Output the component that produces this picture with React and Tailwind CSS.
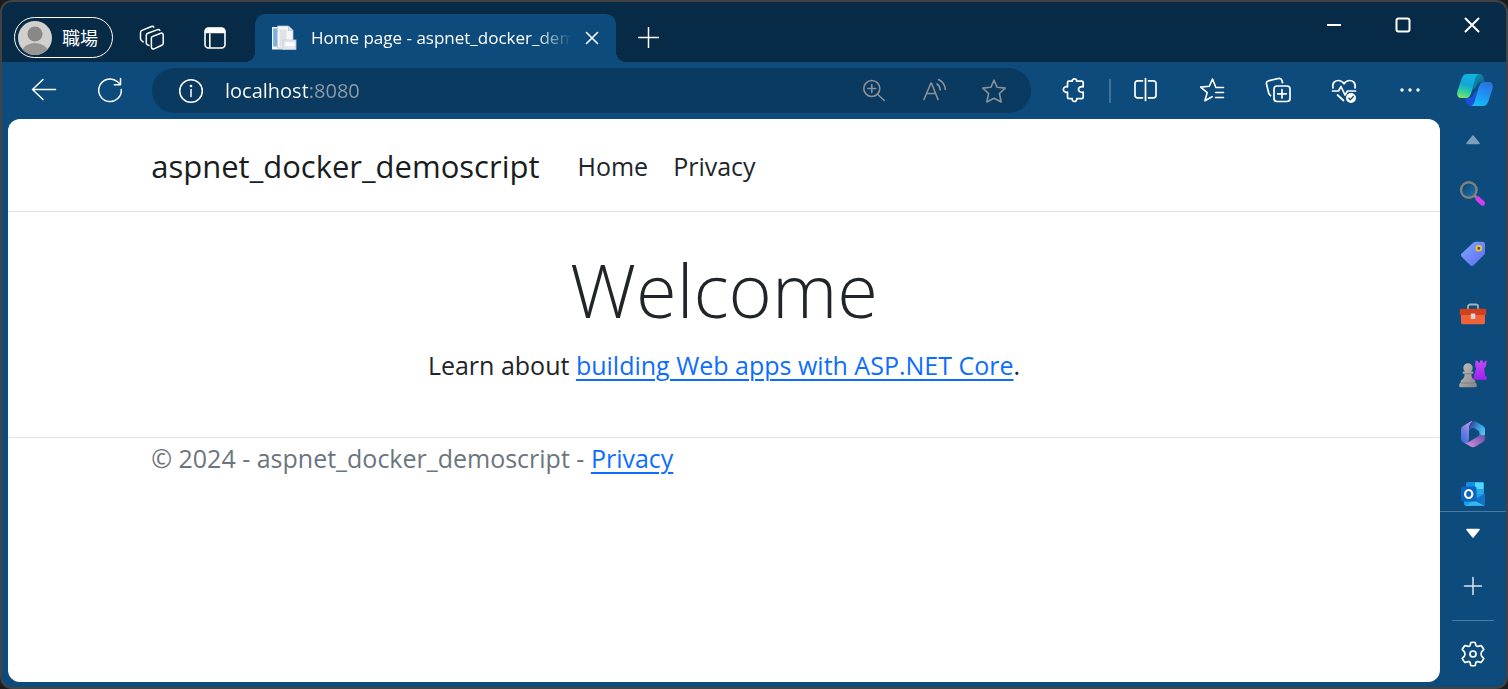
import React from "react";

function Icon({ size = 26, w = 1.6, children }) {
  return (
    <svg
      width={size}
      height={size}
      viewBox={`0 0 ${size} ${size}`}
      fill="none"
      stroke="currentColor"
      strokeWidth={w}
      strokeLinecap="round"
      strokeLinejoin="round"
      aria-hidden="true"
    >
      {children}
    </svg>
  );
}

function IconButton({ label, className = "", children }) {
  return (
    <button type="button" aria-label={label} className={`flex shrink-0 items-center justify-center ${className}`}>
      {children}
    </button>
  );
}

function TitleBar() {
  return (
    <div className="flex h-[60px] shrink-0 items-end bg-[#072b46] pl-3">
      <button
        type="button"
        className="mb-1 flex h-[41px] w-[99px] shrink-0 items-center gap-2.5 rounded-full border border-white pl-[3px] text-[18px] leading-6"
      >
        <svg width="34" height="34" viewBox="0 0 34 34" aria-hidden="true">
          <defs>
            <clipPath id="avatar">
              <circle cx="17" cy="17" r="17" />
            </clipPath>
          </defs>
          <g clipPath="url(#avatar)">
            <rect width="34" height="34" fill="#d2d0ce" />
            <circle cx="17" cy="13" r="7.6" fill="#8a8886" />
            <ellipse cx="17" cy="31" rx="13" ry="9" fill="#979593" />
          </g>
        </svg>
        職場
      </button>
      <IconButton label="Workspaces" className="mb-1 ml-[7px] h-[41px] w-16">
        <Icon size={26} w={1.5}>
          <path d="M13.200 11.600 21.800 8.200c1.200-.4 2.400.4 2.400 1.700v8.300c0 1-.6 1.800-1.500 2.100l-7.600 3.600c-1.400.5-2.700-.3-2.700-1.800V13c0-.7.3-1.200.8-1.400Z" />
          <path d="M10 20.500 8.200 19.600C7.600 19.200 7.300 18.600 7.300 17.900V10.300c0-1 .6-1.800 1.500-2.100L18.600 4.600c.9-.3 1.800 0 2.200.7" />
          <path d="M4.200 16.900 2.400 15.500C1.800 15.100 1.500 14.500 1.500 13.800V7.500c0-1 .6-1.800 1.500-2.100L12.500 1.500c.9-.3 1.900 0 2.300.7" />
        </Icon>
      </IconButton>
      <IconButton label="Tab actions" className="mb-1 h-[41px] w-[62px]">
        <Icon size={24} w={1.6}>
          <rect x="2" y="2" width="20" height="20" rx="3.5" />
          <path d="M2.500 6.500V5A2.500 2.500 0 0 1 5 2.500h14A2.500 2.500 0 0 1 21.500 5v1.500Z" fill="currentColor" />
          <path d="M6.800 8v13.500" />
        </Icon>
      </IconButton>
      <div className="relative ml-[9px] flex h-12 w-[361px] items-center rounded-t-[10px] bg-[#0c4b7b] pl-4 before:absolute before:right-full before:bottom-0 before:size-[10px] before:bg-[radial-gradient(circle_at_0_0,transparent_10px,#0c4b7b_10px)] after:absolute after:bottom-0 after:left-full after:size-[10px] after:bg-[radial-gradient(circle_at_100%_0,transparent_10px,#0c4b7b_10px)]">
        <svg width="26" height="26" viewBox="0 0 26 26" aria-hidden="true">
          <rect x="1" y="2" width="12" height="22.500" fill="#f3f4f6" />
          <rect x="2.200" y="3.500" width="4" height="18" fill="#78b0e0" />
          <path d="M6.500 1h11l4.500 4.500V23H6.500Z" fill="#f6f7f8" stroke="#b9c4cf" strokeWidth="0.800" />
          <path d="M17.500 1v4.500H22" fill="#dde6ee" stroke="#b9c4cf" strokeWidth="0.800" />
          <rect x="8.500" y="4.500" width="7" height="17" fill="#dfe3e6" />
          <rect x="12" y="15" width="13" height="9.500" fill="#e4e8ee" stroke="#c6ced8" strokeWidth="0.800" />
          <rect x="14.500" y="17.500" width="9" height="3.500" fill="#fff" />
        </svg>
        <span className="ml-3.5 min-w-0 flex-1 overflow-hidden text-[17px] leading-6 whitespace-nowrap [mask-image:linear-gradient(90deg,#000_86%,transparent)]">
          Home page - aspnet_docker_demoscript
        </span>
        <IconButton label="Close tab" className="mr-1 size-10">
          <Icon size={14} w={1.6}>
            <path d="m1.500 1.500 11 11M12.500 1.500l-11 11" />
          </Icon>
        </IconButton>
      </div>
      <IconButton label="New tab" className="mb-1 h-[41px] w-16">
        <Icon size={21} w={1.5}>
          <path d="M10.500.500v20M.500 10.500h20" />
        </Icon>
      </IconButton>
      <div className="ml-auto flex self-start">
        <IconButton label="Minimize" className="h-[46px] w-[69px]">
          <Icon size={16} w={2}>
            <path d="M1 8h14" strokeLinecap="butt" />
          </Icon>
        </IconButton>
        <IconButton label="Maximize" className="h-[46px] w-[69px]">
          <Icon size={16} w={2}>
            <rect x="1.500" y="1.500" width="13" height="13" rx="2" />
          </Icon>
        </IconButton>
        <IconButton label="Close" className="h-[46px] w-[69px]">
          <Icon size={16} w={2}>
            <path d="m1.500 1.500 13 13M14.500 1.500l-13 13" />
          </Icon>
        </IconButton>
      </div>
    </div>
  );
}

function CopilotLogo() {
  return (
    <svg width="36" height="32" viewBox="0 0 36 32" aria-hidden="true">
      <defs>
        <linearGradient id="cpl" x1="0.600" y1="0" x2="0.300" y2="1">
          <stop offset="0" stopColor="#12b4e0" />
          <stop offset="0.450" stopColor="#13a6d6" />
          <stop offset="0.750" stopColor="#2fcf9f" />
          <stop offset="1" stopColor="#7be36c" />
        </linearGradient>
        <linearGradient id="cpr" x1="0.700" y1="0" x2="0.300" y2="1">
          <stop offset="0" stopColor="#2a72e0" />
          <stop offset="0.500" stopColor="#1f93f5" />
          <stop offset="1" stopColor="#19bdf6" />
        </linearGradient>
        <linearGradient id="cpt" x1="0" y1="0" x2="1" y2="1">
          <stop offset="0" stopColor="#1298b8" />
          <stop offset="1" stopColor="#0b5a86" />
        </linearGradient>
      </defs>
      <path d="M20 0h2.500c2.500 0 3.500 2 4.300 4.500L28 8h-4c-3 0-4 2-5 5l-4 4Z" fill="url(#cpt)" />
      <path d="M16 32h-2.500c-2.500 0-3.500-2-4.200-4.500L8 24h4c3 0 4-2 5-5l4-4Z" fill="#1c4fe0" />
      <path d="M10.500 0H22c-2.300.6-3 2.800-3.800 5.500L14.500 18c-1.200 4-2.500 6-6 6H4C.4 24-.6 20.500.7 16.500L4.500 5C5.800 1.300 7.500 0 10.500 0Z" fill="url(#cpl)" />
      <path d="M25.500 32H14c2.300-.6 3-2.800 3.800-5.500L21.500 14c1.200-4 2.500-6 6-6H32c3.600 0 4.600 3.500 3.300 7.500L31.500 27c-1.300 3.700-3 5-6 5Z" fill="url(#cpr)" />
    </svg>
  );
}

function Toolbar() {
  return (
    <div className="flex h-[57px] shrink-0 items-center pl-[9px]">
      <IconButton label="Back" className="h-10 w-[66px] pb-0.5">
        <Icon size={26} w={1.5}>
          <path d="M24.500 12.500H1.500M12 2.500 1.500 12.500 12 22.500" />
        </Icon>
      </IconButton>
      <IconButton label="Refresh" className="h-10 w-[66px] pb-0.5">
        <Icon size={26} w={1.500}>
          <path d="M24.300 12.500A11.300 11.300 0 1 1 20.500 4.800L23.500 7.500M23.500 1.500v6.200h-6.200" />
        </Icon>
      </IconButton>
      <div className="mr-2.5 ml-[9px] flex h-[45px] min-w-0 flex-1 items-center rounded-full bg-[#0a3a60] pr-[7px] pl-4">
        <IconButton label="Site information" className="h-10 w-[46px]">
          <Icon size={26} w={1.500}>
            <circle cx="13" cy="13" r="11.300" />
            <path d="M13 11.500v7" />
            <circle cx="13" cy="8" r="0.600" fill="currentColor" />
          </Icon>
        </IconButton>
        <input
          type="text"
          aria-label="Address"
          defaultValue="localhost:8080"
          className="ml-[11px] h-8 min-w-0 flex-1 bg-[linear-gradient(90deg,#fff_83px,#8f9ca8_83px)] bg-clip-text text-[20px] text-transparent outline-none"
        />
        <div className="flex text-[#8b9298]">
          <IconButton label="Zoom" className="h-10 w-[60px] pb-0.5">
            <Icon size={24}>
              <circle cx="9.800" cy="10.500" r="8" />
              <path d="m15.800 16.500 6.500 6M9.800 6.500v8M5.800 10.500h8" />
            </Icon>
          </IconButton>
          <IconButton label="Read aloud" className="h-10 w-[60px] pb-0.5">
            <Icon size={26}>
              <path d="M3 22.500 10 6h.4l6.600 16.500M5.500 16.500h9.200M16 7c1.800 1.200 3 3.200 3.200 6M17.500 2.500c4 1.900 6.500 5.500 6.800 10" />
            </Icon>
          </IconButton>
          <IconButton label="Add to favorites" className="h-10 w-[60px]">
            <Icon size={26}>
              <path d="m13 2.200 3.100 7 8.100.9-5.800 5.400 1.800 8.500-7.200-3.800L5.800 24l1.800-8.500-5.800-5.400 8.100-.9Z" />
            </Icon>
          </IconButton>
        </div>
      </div>
      <IconButton label="Extensions" className="h-10 w-[66px] pb-0.5">
        <Icon size={26} w={1.700}>
          <path d="M8 4.200h3.200c-.5-2.800 4.800-3.200 4.300 0h5.200c.9 0 1.500.6 1.500 1.500v4.100c-6.300-1.200-6.300 6.500 0 5.400v5c0 .9-.6 1.500-1.500 1.500h-5c.5 3.700-5.200 3.700-4.500 0H8c-.9 0-1.500-.6-1.500-1.500v-5c-5.500 1-5.500-6.400 0-5.400V5.700c0-.9.600-1.500 1.500-1.500Z" />
        </Icon>
      </IconButton>
      <div className="mx-0.5 h-6 w-0.5 bg-[#3f719a]" />
      <IconButton label="Split screen" className="h-10 w-[66px] pb-0.5">
        <Icon size={26} w={1.700}>
          <path d="M9.500 3.800H4.500A2.500 2.500 0 0 0 2 6.300v12a2.500 2.500 0 0 0 2.500 2.500h5M15.500 3.800h5A2.500 2.500 0 0 1 23 6.300v12a2.500 2.500 0 0 1-2.500 2.500h-5M12.500 1.500v22" />
        </Icon>
      </IconButton>
      <IconButton label="Favorites" className="h-10 w-[66px] pb-0.5">
        <Icon size={26}>
          <path d="M24.500 10.500h-7.600L13.500 2 10.300 9.200l-8.600.9 6.500 5.500-2.300 8.100 7.200-4M16.500 15.500h8M16.500 20.500h8" />
        </Icon>
      </IconButton>
      <IconButton label="Collections" className="h-10 w-[66px] pb-0.5">
        <Icon size={26} w={1.700}>
          <rect x="9" y="9" width="16" height="15.500" rx="3" />
          <path d="M17 12.500v8.500M12.700 16.800h8.600M5.500 18.500C4.500 18 4 17.200 3.700 16L1.500 7C1.200 5.500 2 4.200 3.500 3.800L13.500 1.500C15 1.200 16.500 2 17 3.500l.5 2.200" />
        </Icon>
      </IconButton>
      <IconButton label="Browser essentials" className="h-10 w-[66px]">
        <Icon size={26} w={1.700}>
          <path d="M2 10C.8 4.500 4.500 2.500 7.500 2.500c2.500 0 4.300 1.500 5.500 3.300C14.200 4 16 2.500 18.500 2.500c3 0 6.500 2 5.500 7.500M1.500 13h6l2.500-4.500 4 8.500 2.500-4h8M6.500 17l6 5.500" />
          <circle cx="20" cy="20" r="5" fill="currentColor" stroke="none" />
          <path d="m17.800 20.200 1.500 1.500 3-3.200" stroke="#0c4b7b" strokeWidth="1.300" />
        </Icon>
      </IconButton>
      <IconButton label="Settings and more" className="h-10 w-[66px] pb-0.5">
        <svg width="22" height="6" viewBox="0 0 22 6" fill="currentColor" aria-hidden="true">
          <circle cx="3" cy="3" r="1.700" />
          <circle cx="11" cy="3" r="1.700" />
          <circle cx="19" cy="3" r="1.700" />
        </svg>
      </IconButton>
      <IconButton label="Copilot" className="h-10 w-[63px] pb-0.5">
        <CopilotLogo />
      </IconButton>
    </div>
  );
}

function Page() {
  return (
    <div className="min-w-0 flex-1 overflow-hidden rounded-[12px] bg-white text-[25px] leading-10 text-[#212529]">
      <header className="border-b border-[#dee2e6]">
        <nav className="mx-auto flex h-[92px] w-4/5 items-center pt-0.5">
          <a href="#home" className="text-[31px] text-[#1a1d20]">
            aspnet_docker_demoscript
          </a>
          <a href="#home" className="ml-[38px]">
            Home
          </a>
          <a href="#privacy" className="ml-[25px]">
            Privacy
          </a>
        </nav>
      </header>
      <main className="mx-auto w-4/5 pt-[23px] pb-[52px] text-center">
        <h1 className="text-[74px] leading-[110px] font-light">Welcome</h1>
        <p>
          Learn about{" "}
          <a href="#docs" className="text-[#0d6efd] underline decoration-2 underline-offset-4">
            building Web apps with ASP.NET Core
          </a>
          .
        </p>
      </main>
      <footer className="border-t border-[#dee2e6] text-[#6c757d]">
        <div className="mx-auto w-4/5">
          © 2024 - aspnet_docker_demoscript -{" "}
          <a href="#privacy" className="text-[#0d6efd] underline decoration-2 underline-offset-4">
            Privacy
          </a>
        </div>
      </footer>
    </div>
  );
}

function SearchArt() {
  return (
    <svg width="28" height="28" viewBox="0 0 28 28" aria-hidden="true">
      <defs>
        <linearGradient id="lens" x1="0" y1="0" x2="1" y2="1">
          <stop offset="0" stopColor="#0b3f68" />
          <stop offset="1" stopColor="#1a78b5" />
        </linearGradient>
      </defs>
      <path d="m15.500 15.500 4 4" stroke="#8a8a8a" strokeWidth="2.500" />
      <path d="m19 19 4.500 4.200" stroke="#d63cf2" strokeWidth="5" strokeLinecap="round" />
      <circle cx="9.800" cy="10" r="7.800" fill="url(#lens)" stroke="#85807d" strokeWidth="2.400" />
    </svg>
  );
}

function TagArt() {
  return (
    <svg width="26" height="26" viewBox="0 0 26 26" aria-hidden="true">
      <defs>
        <linearGradient id="tag" x1="0" y1="0" x2="1" y2="1">
          <stop offset="0" stopColor="#84a9ff" />
          <stop offset="1" stopColor="#5a68f0" />
        </linearGradient>
      </defs>
      <path d="M13.500 1.500C14.300 1 15 .8 16 .8h6.500c1.600 0 2.500.9 2.500 2.500v8c0 1-.3 1.900-1 2.600L13.600 24.200c-1 1-2.400 1-3.400 0L1.700 15.700c-1-1-1-2.400.2-3.400Z" fill="url(#tag)" />
      <circle cx="18.800" cy="7.200" r="2.400" fill="#3c4bb0" stroke="#f7c81c" strokeWidth="1.800" />
    </svg>
  );
}

function ToolboxArt() {
  return (
    <svg width="28" height="22" viewBox="0 0 28 22" aria-hidden="true">
      <path d="M9 6V3.500A2 2 0 0 1 11 1.500h6a2 2 0 0 1 2 2V6" fill="none" stroke="#aab2ba" strokeWidth="1.800" />
      <path d="M2 10h24v9.500c0 1-.8 1.700-1.700 1.700H3.700c-1 0-1.700-.7-1.700-1.700Z" fill="#f0623a" />
      <path d="M2.300 5.800h23.400c1 0 1.500.7 1.500 1.500V12H.8V7.300c0-.8.600-1.500 1.500-1.500Z" fill="#d1401f" />
      <rect x="11.800" y="10.500" width="4.500" height="5.500" rx="1" fill="#d6dade" />
    </svg>
  );
}

function GamesArt() {
  return (
    <svg width="28" height="30" viewBox="0 0 28 30" aria-hidden="true">
      <defs>
        <linearGradient id="rook" x1="0" y1="0" x2="0" y2="1">
          <stop offset="0" stopColor="#c24bf5" />
          <stop offset="1" stopColor="#a01ff0" />
        </linearGradient>
        <linearGradient id="pawn" x1="0" y1="0" x2="1" y2="1">
          <stop offset="0" stopColor="#c2c2c2" />
          <stop offset="1" stopColor="#858585" />
        </linearGradient>
      </defs>
      <path d="M16.500 1.500l2.300.5.500 1.500 1.700-.1V1.500h2.800v1.900l1.700.1.500-1.500 1.700-.5-.8 6.300-1.700 1.200.8 7.500 1.800 1.800v2.500H14.500l.5-4 2.300-7.800-1.200-1.200Z" fill="url(#rook)" />
      <path d="M6 12.500A4.700 4.700 0 1 1 12 12.500h1.500c1.200 0 1.200 2.300 0 2.300h-1.200c.2 3 .8 4.800 3 6.300 1.200.8 1.200 1.600 1 2.700 1.300.5 1.500 1.200 1.500 3.500 0 .5-.4.900-1 .9H1.200c-.6 0-1-.4-1-.9 0-2.300.2-3 1.500-3.500-.2-1.100-.2-1.900 1-2.700 2.200-1.500 2.800-3.300 3-6.300H4.500c-1.200 0-1.200-2.300 0-2.300Z" fill="url(#pawn)" />
      <path d="M2 24h14M5.700 14.800h6.600" stroke="#7a7a7a" strokeWidth="0.800" />
    </svg>
  );
}

function OfficeArt() {
  return (
    <svg width="26" height="28" viewBox="0 0 26 28" aria-hidden="true">
      <defs>
        <linearGradient id="ofa" x1="0.200" y1="1" x2="0.800" y2="0">
          <stop offset="0" stopColor="#3f6fe0" />
          <stop offset="0.450" stopColor="#6f7fdf" />
          <stop offset="1" stopColor="#c89be8" />
        </linearGradient>
        <linearGradient id="ofb" x1="0" y1="0.200" x2="1" y2="0.800">
          <stop offset="0" stopColor="#2f3f9a" />
          <stop offset="0.550" stopColor="#3f9fe0" />
          <stop offset="1" stopColor="#58cdf5" />
        </linearGradient>
        <linearGradient id="ofc" x1="0" y1="0.800" x2="1" y2="0.200">
          <stop offset="0" stopColor="#d794e3" />
          <stop offset="1" stopColor="#6d4fae" />
        </linearGradient>
      </defs>
      <path d="M11 1.200 3 6C1.600 6.900 1 8 1 9.500v9c0 2.200 1.300 3.500 3 4.200 2.700.9 5-.9 5-3.700V8.500c0-3 1-5.200 3.500-7.500-.5 0-1 0-1.500.2Z" fill="url(#ofa)" />
      <path d="M15.500 1.300C12.500.500 9 4 9 8.500V10l3-1.800c.8-.4 1.600-.4 2.400 0L18 10.500c1 .6 1.500 1.500 1.500 2.700v6c3 .5 5.500-1.200 5.500-4.200V9.500C25 8 24.400 6.900 23 6Z" fill="url(#ofb)" />
      <path d="M25 14.500v4c0 1.500-.6 2.600-2 3.400L15.500 26.500c-1.500.9-3.500.9-5 0L4 22.600c2 .6 3.700 0 5.500-1l8.500-5c1-.6 1.500-1.500 1.500-2.800 2.500 2 4.200 2 5.500.7Z" fill="url(#ofc)" />
    </svg>
  );
}

function OutlookArt() {
  return (
    <svg width="26" height="26" viewBox="0 0 26 26" aria-hidden="true">
      <rect x="6" y="1" width="18" height="16" rx="1.500" fill="#1490df" />
      <rect x="15" y="1.500" width="8.500" height="6.500" fill="#50d9ff" />
      <rect x="15" y="8" width="8.500" height="6.500" fill="#28a8ea" />
      <path d="M4 13 25 13v10c0 1-.7 1.700-1.700 1.700H5.700C4.700 24.700 4 24 4 23Z" fill="#1b9de2" />
      <path d="M25 12.500 13 19.500l11 5.200c.6-.3 1-.9 1-1.700Z" fill="#1272c4" />
      <path d="m5 24.700 9-5.200 10.500 5.200Z" fill="#35b8f1" />
      <rect x="1" y="5.500" width="15.500" height="15" rx="1.500" fill="#0a64c0" />
      <ellipse cx="8.700" cy="13" rx="3.600" ry="4" fill="none" stroke="#fff" strokeWidth="2.200" />
    </svg>
  );
}

const apps = [
  ["Search", SearchArt],
  ["Shopping", TagArt],
  ["Tools", ToolboxArt],
  ["Games", GamesArt],
  ["Microsoft 365", OfficeArt],
  ["Outlook", OutlookArt],
];

function Sidebar() {
  return (
    <aside className="-mb-[5px] flex w-[66px] shrink-0 flex-col">
      <IconButton label="Scroll up" className="h-[45px] pb-1 text-[#7d9fba]">
        <Icon size={16}>
          <path d="M8 4 14 11.500H2Z" fill="currentColor" />
        </Icon>
      </IconButton>
      <div className="min-h-0 flex-1 overflow-hidden">
        {apps.map(([label, Art]) => (
          <IconButton key={label} label={label} className="h-[60px] w-full">
            <Art />
          </IconButton>
        ))}
      </div>
      <div className="flex shrink-0 flex-col border-t border-[#4a7ba3]">
        <IconButton label="Scroll down" className="h-[42px]">
          <Icon size={16}>
            <path d="M8 12 14 4.500H2Z" fill="currentColor" />
          </Icon>
        </IconButton>
        <IconButton label="Add to sidebar" className="h-[66px] pb-0.5 text-[#dbe6ef]">
          <Icon size={20} w={1.500}>
            <path d="M10 1.500v17M1.500 10h17" />
          </Icon>
        </IconButton>
        <div className="mx-3 h-px bg-[#4a7ba3]" />
        <IconButton label="Settings" className="h-[66px]">
          <Icon size={26} w={1.700}>
            <path d="M10.800 1.500Q13 1 15.200 1.500L15.900 4.500Q16.400 5.700 17.800 5.400L20.900 4.500Q22.800 6.200 23.800 8.500L21.600 10.900Q20.300 13 21.600 15.100L23.800 17.500Q22.800 19.800 20.900 21.500L17.800 20.600Q16.400 20.300 15.900 21.500L15.200 24.500Q13 25 10.800 24.500L10.100 21.500Q9.600 20.300 8.200 20.600L5.100 21.500Q3.200 19.800 2.200 17.500L4.400 15.100Q5.700 13 4.400 10.900L2.200 8.500Q3.200 6.200 5.100 4.500L8.200 5.400Q9.600 5.700 10.100 4.500Z" />
            <circle cx="13" cy="13" r="3" />
          </Icon>
        </IconButton>
      </div>
    </aside>
  );
}

export default function App() {
  return (
    <div className="h-screen bg-[#1c1c1c] font-['Open_Sans','Noto_Sans_CJK_JP',sans-serif]">
      <div className="flex h-full flex-col overflow-hidden rounded-[12px] border-2 border-[#424242] bg-[#0c4b7b] text-white">
        <TitleBar />
        <Toolbar />
        <div className="flex min-h-0 flex-1 pb-[5px] pl-1.5">
          <Page />
          <Sidebar />
        </div>
      </div>
    </div>
  );
}
